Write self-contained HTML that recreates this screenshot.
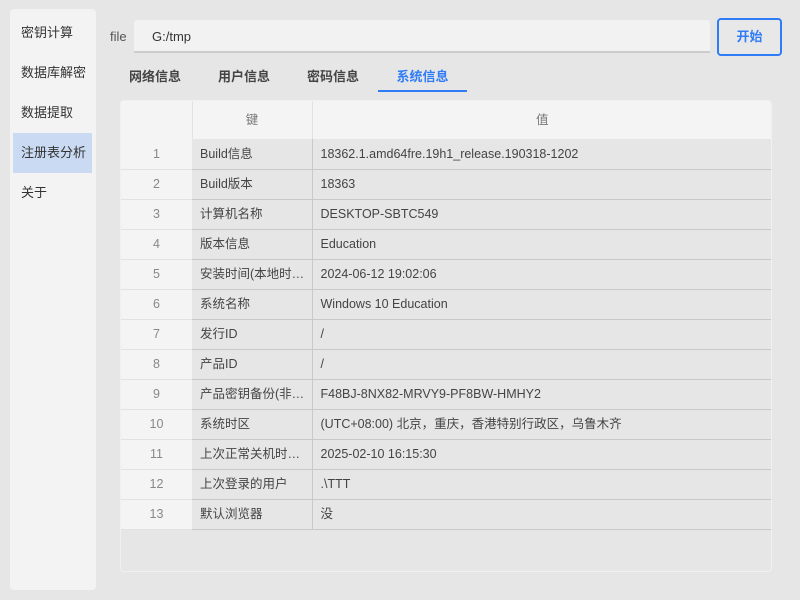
<!DOCTYPE html>
<html><head><meta charset="utf-8"><style>
*{margin:0;padding:0;box-sizing:border-box}
body{width:800px;height:600px;background:#e6e6e6;font-family:"Liberation Sans","Noto Sans CJK SC",sans-serif;color:#444;position:relative;overflow:hidden;font-size:13px}
.side{position:absolute;left:10px;top:9px;width:86px;height:581px;background:#f3f3f3;border-radius:4px}
.side div{position:absolute;left:3px;width:79px;height:40px;line-height:40px;padding-left:8px;font-size:13px;color:#333}
.side .sel{background:#c9daf2}
.lbl{position:absolute;left:110px;top:29px;font-size:13px;color:#555}
.inp{position:absolute;left:134px;top:20px;width:576px;height:33px;background:#f2f2f2;border-bottom:2px solid #ccc;border-radius:3px 3px 0 0;padding-left:18px;line-height:33px;font-size:13px;color:#333}
.btn{position:absolute;left:717px;top:18px;width:65px;height:38px;border:2px solid #2f7cf6;border-radius:4px;color:#2f7cf6;font-weight:bold;text-align:center;line-height:34px;font-size:13px;background:#e8e8e8}
.tab{position:absolute;top:66px;font-weight:bold;font-size:13px;color:#444;height:26px;text-align:center}
.tab.act{color:#2f7cf6;border-bottom:2px solid #2f7cf6}
.tbl{position:absolute;left:120px;top:100px;width:652px;height:472px;background:#e6e6e6;border:1px solid #f0f0f0;border-radius:4px;overflow:hidden}
table{border-collapse:collapse;width:652px;font-size:12.5px}
th{height:38px;background:#f4f4f4;font-weight:normal;color:#777;border-right:1px solid #e2e2e2;line-height:1;padding-top:1px}
td{height:30px;border-bottom:1px solid #c9c9c9;border-right:1px solid #c9c9c9;padding-left:8px;color:#444;white-space:nowrap;line-height:1}
td span{display:inline-block;line-height:16px;vertical-align:middle}
td.i{background:#f4f4f4;text-align:center;padding:0;color:#888;border-bottom:1px solid #e2e2e2;border-right:none}
</style></head><body>
<div class="side">
<div style="top:4px">密钥计算</div>
<div style="top:44px">数据库解密</div>
<div style="top:84px">数据提取</div>
<div class="sel" style="top:124px">注册表分析</div>
<div style="top:164px">关于</div>
</div>
<div class="lbl">file</div>
<div class="inp">G:/tmp</div>
<div class="btn">开始</div>
<div class="tab" style="left:120px;width:70px">网络信息</div>
<div class="tab" style="left:209px;width:70px">用户信息</div>
<div class="tab" style="left:298px;width:70px">密码信息</div>
<div class="tab act" style="left:378px;width:89px">系统信息</div>
<div class="tbl"><table>
<tr><th style="width:71px"></th><th style="width:120px">键</th><th>值</th></tr>
<tr><td class="i">1</td><td><span>Build信息</span></td><td><span>18362.1.amd64fre.19h1_release.190318-1202</span></td></tr>
<tr><td class="i">2</td><td><span>Build版本</span></td><td><span>18363</span></td></tr>
<tr><td class="i">3</td><td><span>计算机名称</span></td><td><span>DESKTOP-SBTC549</span></td></tr>
<tr><td class="i">4</td><td><span>版本信息</span></td><td><span>Education</span></td></tr>
<tr><td class="i">5</td><td><span>安装时间(本地时…</span></td><td><span>2024-06-12 19:02:06</span></td></tr>
<tr><td class="i">6</td><td><span>系统名称</span></td><td><span>Windows 10 Education</span></td></tr>
<tr><td class="i">7</td><td><span>发行ID</span></td><td><span>/</span></td></tr>
<tr><td class="i">8</td><td><span>产品ID</span></td><td><span>/</span></td></tr>
<tr><td class="i">9</td><td><span>产品密钥备份(非…</span></td><td><span>F48BJ-8NX82-MRVY9-PF8BW-HMHY2</span></td></tr>
<tr><td class="i">10</td><td><span>系统时区</span></td><td><span>(UTC+08:00) 北京，重庆，香港特别行政区，乌鲁木齐</span></td></tr>
<tr><td class="i">11</td><td><span>上次正常关机时…</span></td><td><span>2025-02-10 16:15:30</span></td></tr>
<tr><td class="i">12</td><td><span>上次登录的用户</span></td><td><span>.\TTT</span></td></tr>
<tr><td class="i">13</td><td><span>默认浏览器</span></td><td><span>没</span></td></tr>
</table></div>
</body></html>
